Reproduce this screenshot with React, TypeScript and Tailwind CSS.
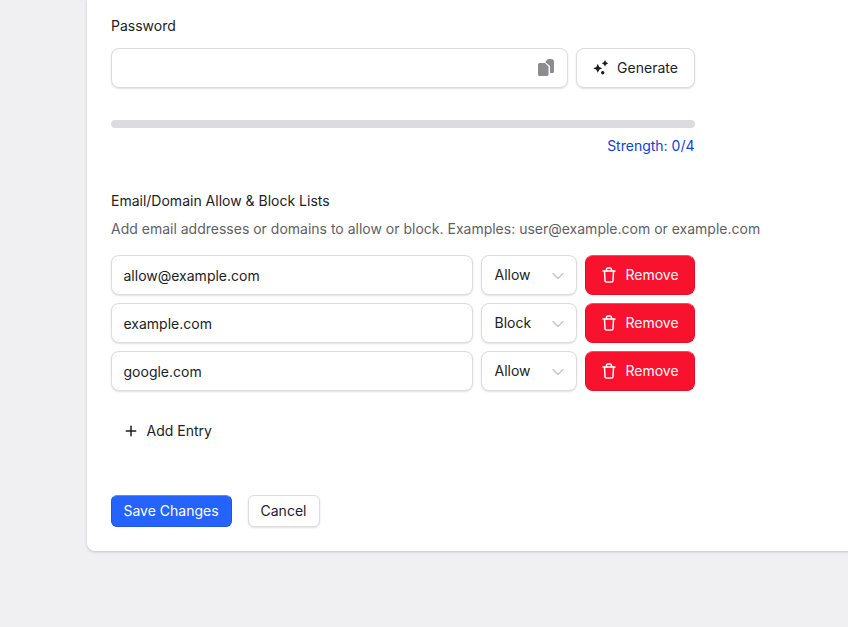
import { ChevronDown, Plus } from 'lucide-react';

const entries = [
  { value: 'allow@example.com', mode: 'Allow' },
  { value: 'example.com', mode: 'Block' },
  { value: 'google.com', mode: 'Allow' },
];

const fieldBorder = 'border border-[#dcdcde] shadow-[0_1px_2px_rgba(0,0,0,0.12)] bg-white';

function CopyIcon() {
  return (
    <svg width="20" height="20" viewBox="0 0 20 20" fill="#8c8c8f">
      <path d="M3 6.500A1.500 1.500 0 0 1 4.500 5H10l3.500 3.500v8A1.500 1.500 0 0 1 12 18H4.500A1.500 1.500 0 0 1 3 16.500z" />
      <path d="M10.200 4L12 2a3 3 0 0 1 2-1h2a3 3 0 0 1 3 3v9.500a1.500 1.500 0 0 1-1.500 1.500H15V8z" />
    </svg>
  );
}

function SparkIcon() {
  return (
    <svg width="16" height="16" viewBox="0 0 16 16" fill="#1b1b1f">
      <path d="M4.800 3.800l1.400 3.100 3.100 1.400-3.100 1.400-1.400 3.100-1.400-3.100L.3 8.300l3.100-1.400z" />
      <path d="M12 0l1.100 2.200 2.200 1.100-2.200 1.100L12 6.600l-1.100-2.200-2.200-1.100 2.200-1.100z" />
      <circle cx="9.700" cy="12.700" r="1.700" />
    </svg>
  );
}

function TrashIcon() {
  return (
    <svg width="16" height="16" viewBox="0 0 16 16" fill="none" stroke="white" strokeWidth="1.500" strokeLinecap="round" strokeLinejoin="round">
      <path d="M2 4h12" />
      <path d="M3.500 4l.5 9.300A1.500 1.500 0 0 0 5.500 15h5a1.500 1.500 0 0 0 1.500-1.700l.5-9.300" />
      <path d="M5.500 4V2.500A1.500 1.500 0 0 1 7 1h2a1.500 1.500 0 0 1 1.500 1.500V4" />
    </svg>
  );
}

export default function App() {
  return (
    <div className="h-[627px] w-[848px] overflow-hidden bg-[#f0f0f2] pl-[87px] font-['Inter',sans-serif] text-sm text-[#222226]">
      <div className="w-[900px] rounded-b-lg bg-white pb-6 pl-6 pt-4 shadow-[0_1px_3px_rgba(0,0,0,0.18)]">
        <div className="w-[584px]">
          <div className="mb-3 h-5 leading-5">Password</div>
          <div className="flex gap-2">
            <div className={`flex h-10 flex-1 items-center justify-end rounded-lg pr-3 ${fieldBorder}`}>
              <CopyIcon />
            </div>
            <button className={`flex h-10 w-[119px] items-center justify-center gap-2 rounded-lg ${fieldBorder}`}>
              <SparkIcon />
              Generate
            </button>
          </div>

          <div className="mt-8 h-2 rounded-full bg-[#dcdce0]" />
          <div className="mt-2 h-5 pr-[0.5px] text-right leading-5 text-[#0f3fd8]">Strength: 0/4</div>

          <div className="mt-[35px] h-5 leading-5">Email/Domain Allow &amp; Block Lists</div>
          <div className="mt-2 h-5 whitespace-nowrap leading-5 text-[#5f5f66]">
            Add email addresses or domains to allow or block. Examples: user@example.com or example.com
          </div>

          <div className="mt-4 flex flex-col gap-2">
            {entries.map((entry) => (
              <div key={entry.value} className="flex gap-2">
                <div className={`flex h-10 w-[362px] items-center rounded-lg pl-[11.500px] pr-3 pt-px ${fieldBorder}`}>{entry.value}</div>
                <div className={`flex h-10 w-24 items-center justify-between rounded-lg pl-[12.500px] pr-2 ${fieldBorder}`}>
                  {entry.mode}
                  <ChevronDown size={20} color="#c4c4c8" strokeWidth={1.5} className="mt-px" />
                </div>
                <button className="flex h-10 flex-1 items-center justify-center gap-2 rounded-lg border border-[#e00f28] border-t-[#ff4a5c] bg-[#f9122e] text-white">
                  <TrashIcon />
                  Remove
                </button>
              </div>
            ))}
          </div>

          <button className="mt-5 flex h-10 items-center gap-2 px-3">
            <Plus size={16} color="#1b1b1f" strokeWidth={2.25} />
            <span className="-ml-[0.5px]">Add Entry</span>
          </button>

          <div className="mt-11 flex gap-4">
            <button className="h-8 w-[121px] rounded-md border border-[#1f55e0] border-t-[#5a8aff] bg-[#2563ff] pr-px text-white">Save Changes</button>
            <button className={`h-8 w-[72px] rounded-md pr-px ${fieldBorder}`}>Cancel</button>
          </div>
        </div>
      </div>
    </div>
  );
}
